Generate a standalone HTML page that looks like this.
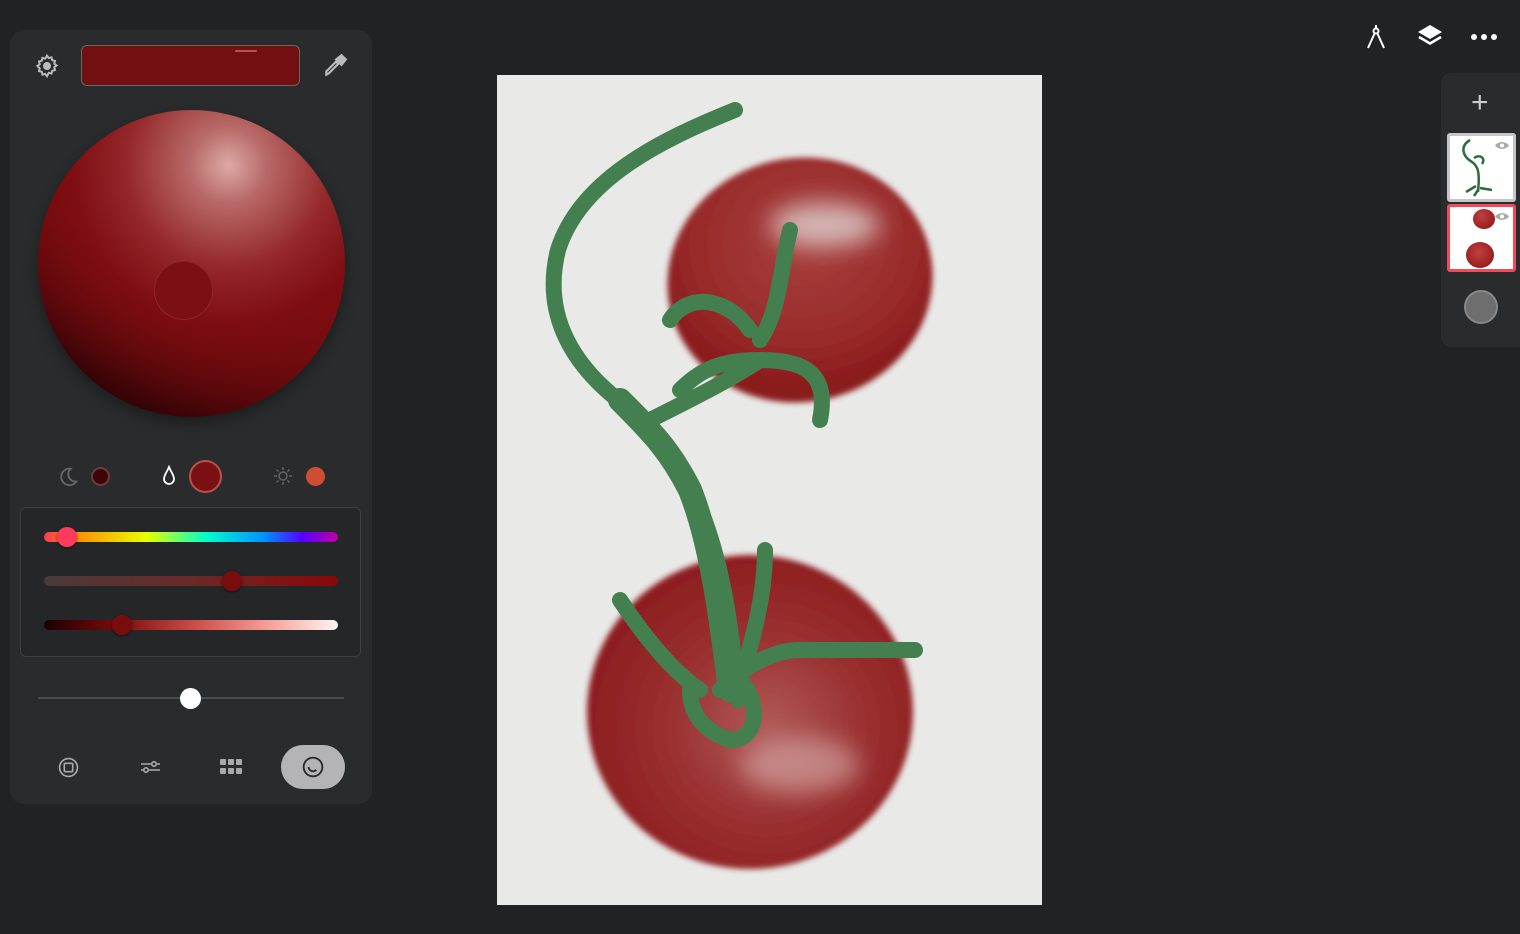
<!DOCTYPE html>
<html><head><meta charset="utf-8"><style>
*{margin:0;padding:0;box-sizing:border-box}
body{width:1520px;height:934px;background:#212224;position:relative;overflow:hidden;font-family:"Liberation Sans",sans-serif}
.panel{position:absolute;left:10px;top:30px;width:362px;height:774px;background:#2a2b2d;border-radius:14px}
.abs{position:absolute}
</style></head><body>
<div class="panel"></div>
<div class="abs" style="left:81px;top:45px;width:219px;height:41px;background:#720f10;border:1px solid #666;border-radius:6px"></div>
<div class="abs" style="left:235px;top:50px;width:22px;height:2px;background:#b05555;border-radius:1px"></div>
<svg class="abs" style="left:34px;top:53px" width="26" height="26" viewBox="0 0 24 24" fill="none" stroke="#bbb" stroke-width="1.8"><path d="M12 2.5l1.6 2.2 2.6-.7.6 2.6 2.6.7-.7 2.6 2.2 1.6-2.2 1.6.7 2.6-2.6.7-.6 2.6-2.6-.7L12 21.5l-1.6-2.2-2.6.7-.6-2.6-2.6-.7.7-2.6L3.1 12l2.2-1.6-.7-2.6 2.6-.7.6-2.6 2.6.7z"/><circle cx="12" cy="12" r="2.8" fill="#bbb"/></svg>
<svg class="abs" style="left:322px;top:53px" width="26" height="26" viewBox="0 0 24 24" fill="none" stroke="#bbb" stroke-width="2"><path d="M4 20l2-1 9-9-2-2-9 9z"/><path d="M13 6l5-4 4 4-4 5z" fill="#bbb"/></svg>
<div class="abs" style="left:38px;top:110px;width:307px;height:307px;border-radius:50%;background:radial-gradient(circle at 62% 18%,#ddaaa6 0%,#b86a68 12%,#95282a 32%,#7d0d10 50%,rgba(70,5,8,0) 80%),linear-gradient(30deg,#2e0306 10%,#5a070b 35%,#7d0d10 60%,#8a1a1c 100%);box-shadow:0 6px 14px rgba(0,0,0,.35)"></div>
<div class="abs" style="left:154px;top:261px;width:59px;height:59px;border-radius:50%;background:#7a1012;border:1px solid #8e2426"></div>
<svg class="abs" style="left:57px;top:466px" width="22" height="22" viewBox="0 0 24 24" fill="none" stroke="#666" stroke-width="2"><path d="M15 3a9 9 0 1 0 6 14A8 8 0 0 1 15 3z"/></svg>
<div class="abs" style="left:91px;top:467px;width:19px;height:19px;border-radius:50%;background:#3e0509;border:2px solid #6a3c3e"></div>
<svg class="abs" style="left:160px;top:465px" width="18" height="22" viewBox="0 0 18 22" fill="none" stroke="#fff" stroke-width="1.8"><path d="M9 2C7 7 4 10 4 14a5 5 0 0 0 10 0c0-4-3-7-5-12z"/></svg>
<div class="abs" style="left:189px;top:460px;width:33px;height:33px;border-radius:50%;background:#7a1012;border:2px solid #b6524d"></div>
<svg class="abs" style="left:273px;top:466px" width="20" height="20" viewBox="0 0 20 20" fill="none" stroke="#666" stroke-width="1.4"><circle cx="10" cy="10" r="4"/><path d="M10 1v3M10 16v3M1 10h3M16 10h3M3.6 3.6l2 2M14.4 14.4l2 2M3.6 16.4l2-2M14.4 5.6l2-2"/></svg>
<div class="abs" style="left:306px;top:467px;width:19px;height:19px;border-radius:50%;background:#cf4d30"></div>
<div class="abs" style="left:20px;top:507px;width:341px;height:150px;border:1px solid #3e3f41;border-radius:6px;background:#252628"></div>
<div class="abs" style="left:44px;top:532px;width:294px;height:10px;border-radius:5px;background:linear-gradient(90deg,#ff3a5a,#ff8a00 10%,#e8ff00 35%,#00ffcc 55%,#0090ff 75%,#5500ff 88%,#c000a0)"></div>
<div class="abs" style="left:57px;top:527px;width:20px;height:20px;border-radius:50%;background:#ff3b5c;box-shadow:0 1px 3px rgba(0,0,0,.5)"></div>
<div class="abs" style="left:44px;top:576px;width:294px;height:10px;border-radius:5px;background:linear-gradient(90deg,#4a3a3a,#6a2a28 50%,#8a0808)"></div>
<div class="abs" style="left:222px;top:571px;width:20px;height:20px;border-radius:50%;background:#7b0c0e;box-shadow:0 1px 3px rgba(0,0,0,.5)"></div>
<div class="abs" style="left:44px;top:620px;width:294px;height:10px;border-radius:5px;background:linear-gradient(90deg,#1a0000,#7a0c0c 25%,#c84a44 50%,#f59a94 75%,#fff5f2)"></div>
<div class="abs" style="left:112px;top:615px;width:20px;height:20px;border-radius:50%;background:#7b0c0e;box-shadow:0 1px 3px rgba(0,0,0,.5)"></div>
<div class="abs" style="left:38px;top:697px;width:306px;height:2px;background:#4a4b4d"></div>
<div class="abs" style="left:180px;top:688px;width:21px;height:21px;border-radius:50%;background:#fff"></div>
<svg class="abs" style="left:58px;top:757px" width="21" height="21" viewBox="0 0 20 20" fill="none" stroke="#aaa" stroke-width="1.6"><circle cx="10" cy="10" r="8.5"/><rect x="6" y="6" width="8" height="8" rx="1"/></svg>
<svg class="abs" style="left:140px;top:758px" width="21" height="18" viewBox="0 0 21 18" fill="none" stroke="#aaa" stroke-width="1.6"><path d="M1 6h19M1 12h19"/><circle cx="14" cy="6" r="2.2" fill="#2a2b2d"/><circle cx="6" cy="12" r="2.2" fill="#2a2b2d"/></svg>
<svg class="abs" style="left:220px;top:759px" width="22" height="16" viewBox="0 0 22 16" fill="#aaa"><rect x="0" y="0" width="6" height="6" rx="1"/><rect x="8" y="0" width="6" height="6" rx="1"/><rect x="16" y="0" width="6" height="6" rx="1"/><rect x="0" y="9" width="6" height="6" rx="1"/><rect x="8" y="9" width="6" height="6" rx="1"/><rect x="16" y="9" width="6" height="6" rx="1"/></svg>
<div class="abs" style="left:281px;top:745px;width:64px;height:44px;border-radius:22px;background:#b4b4b6"></div>
<svg class="abs" style="left:302px;top:756px" width="22" height="22" viewBox="0 0 20 20" fill="none" stroke="#2a2a2a" stroke-width="1.7"><circle cx="10" cy="10" r="8.5"/><path d="M6 10a4 4 0 0 0 7 2.5"/></svg>
<svg class="abs" style="left:1364px;top:24px" width="24" height="26" viewBox="0 0 24 26" fill="none" stroke="#fff" stroke-width="2"><circle cx="12" cy="7" r="2.5"/><path d="M12 1v3.5M10.8 9L4 24M13.2 9L20 24"/></svg>
<svg class="abs" style="left:1416px;top:24px" width="28" height="26" viewBox="0 0 28 26"><path d="M14 1L26 8 14 15 2 8z" fill="#fff"/><path d="M3 13l11 6.5L25 13" fill="none" stroke="#fff" stroke-width="2.6"/></svg>
<div class="abs" style="left:1471px;top:34px;width:6px;height:6px;border-radius:50%;background:#fff"></div>
<div class="abs" style="left:1481px;top:34px;width:6px;height:6px;border-radius:50%;background:#fff"></div>
<div class="abs" style="left:1491px;top:34px;width:6px;height:6px;border-radius:50%;background:#fff"></div>
<div class="abs" style="left:1441px;top:73px;width:90px;height:274px;border-radius:10px;background:#2a2b2d"></div>
<div class="abs" style="left:1471px;top:88px;color:#ccc;font-size:30px;font-weight:300;line-height:30px">+</div>
<div class="abs" style="left:1447px;top:133px;width:69px;height:69px;background:#fff;border:3px solid #c6c6c6;border-radius:3px;overflow:hidden">
<svg width="63" height="63" viewBox="0 0 63 63" fill="none" stroke="#2e6b3a" stroke-width="2.5"><path d="M20 4C10 10 12 20 22 26c6 4 8 10 6 30"/><path d="M24 22c6-4 12 0 8 6M26 50l-10 6M30 52l12 2M28 54l-4 6"/></svg>
</div>
<svg class="abs" style="left:1494px;top:140px" width="16" height="11" viewBox="0 0 16 11"><path d="M1 5.5C4 1 12 1 15 5.5 12 10 4 10 1 5.5z" fill="#aaa"/><circle cx="8" cy="5.5" r="2" fill="#fff"/></svg>
<div class="abs" style="left:1447px;top:204px;width:69px;height:68px;background:#fff;border:3px solid #f24a5a;border-radius:3px"></div>
<div class="abs" style="left:1473px;top:209px;width:22px;height:20px;border-radius:50%;background:radial-gradient(circle at 40% 35%,#c04040,#8a1010)"></div>
<div class="abs" style="left:1466px;top:242px;width:28px;height:26px;border-radius:50%;background:radial-gradient(circle at 45% 40%,#c04040,#8a1010)"></div>
<svg class="abs" style="left:1494px;top:211px" width="16" height="11" viewBox="0 0 16 11"><path d="M1 5.5C4 1 12 1 15 5.5 12 10 4 10 1 5.5z" fill="#aaa"/><circle cx="8" cy="5.5" r="2" fill="#fff"/></svg>
<div class="abs" style="left:1464px;top:290px;width:34px;height:34px;border-radius:50%;background:#6e6e6e;border:2px solid #888"></div>
<div class="abs" style="left:497px;top:75px;width:545px;height:830px;background:#e9e9e8"></div>
<svg class="abs" style="left:0;top:0" width="1520" height="934" viewBox="0 0 1520 934">
<defs>
<filter id="b" x="-20%" y="-20%" width="140%" height="140%"><feGaussianBlur stdDeviation="3"/></filter>
<filter id="b2" x="-100%" y="-100%" width="300%" height="300%"><feGaussianBlur stdDeviation="12"/></filter>
<radialGradient id="t1" cx="55%" cy="35%" r="60%"><stop offset="0" stop-color="#a8403e"/><stop offset=".7" stop-color="#982a2a"/><stop offset="1" stop-color="#8a1a1c"/></radialGradient>
<radialGradient id="t2" cx="55%" cy="55%" r="60%"><stop offset="0" stop-color="#b05a58"/><stop offset=".5" stop-color="#9a3030"/><stop offset="1" stop-color="#8a1a1c"/></radialGradient>
</defs>
<ellipse cx="800" cy="280" rx="133" ry="122" transform="rotate(-12 800 280)" fill="url(#t1)" filter="url(#b)"/>
<ellipse cx="825" cy="225" rx="55" ry="22" fill="#e0d4d2" opacity=".8" filter="url(#b2)"/>
<ellipse cx="750" cy="712" rx="163" ry="157" fill="url(#t2)" filter="url(#b)"/>
<ellipse cx="800" cy="765" rx="60" ry="28" fill="#d8b0ae" opacity=".6" filter="url(#b2)"/>
<g fill="none" stroke="#44804f" stroke-linecap="round">
<path d="M735 110C660 140 580 180 558 250c-15 60 10 110 60 150 40 30 70 70 90 130 20 60 25 120 30 170" stroke-width="16"/>
<path d="M620 400c30 30 50 50 70 90 20 50 30 120 40 200" stroke-width="24"/>
<path d="M650 420c40-20 80-40 110-60M680 390c20-20 40-30 80-30 40 0 70 10 60 60M760 340c20-30 20-70 30-110M670 320c20-30 60-20 80 10M700 690c-30-20-60-60-80-90M720 690c20-20 50-40 80-40 40 0 80 0 115 0M740 680c10-30 25-80 25-130M690 690c0 20 10 40 40 50 30 0 30-40 10-60" stroke-width="16"/>
</g>
</svg>
</body></html>
